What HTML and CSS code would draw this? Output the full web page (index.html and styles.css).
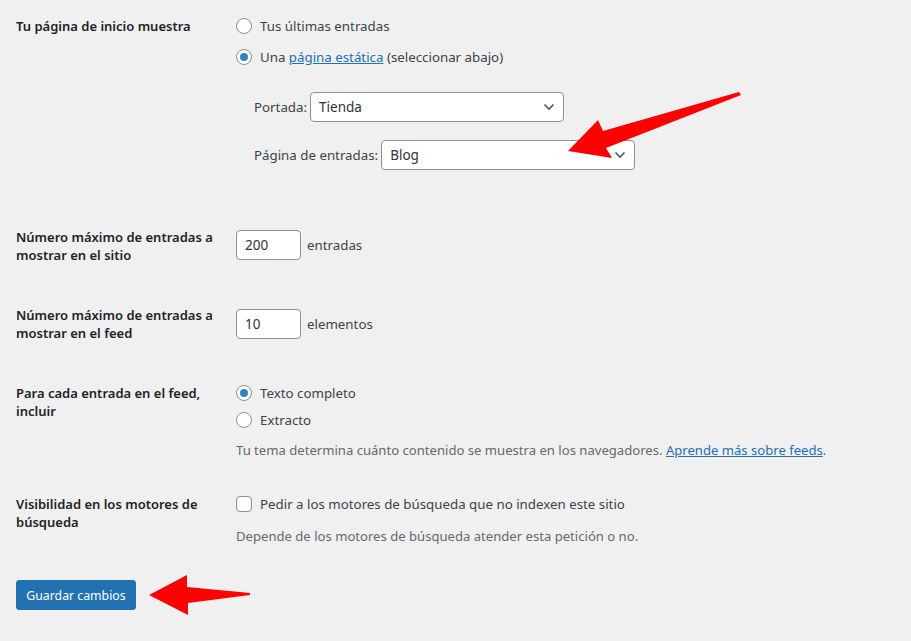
FILE: index.html
```html
<!DOCTYPE html>
<html lang="es">
<head>
<meta charset="utf-8">
<title>Ajustes de lectura</title>
<link rel="stylesheet" href="styles.css">
</head>
<body>
<div class="page">
  <div class="row row-front">
    <div class="th">Tu página de inicio muestra</div>
    <div class="td">
      <div class="opt"><span class="radio"></span><span>Tus últimas entradas</span></div>
      <div class="opt opt-2"><span class="radio checked"></span><span>Una <a href="#">página estática</a> (seleccionar abajo)</span></div>
      <div class="sub">
        <div class="subrow"><span>Portada:</span><span class="select sel-front"><span>Tienda</span><svg class="chev" width="12" height="8" viewBox="0 0 12 8"><path d="M1.5 1.5 L6 6 L10.5 1.5" fill="none" stroke="#50575e" stroke-width="1.6"/></svg></span></div>
        <div class="subrow subrow-2"><span>Página de entradas:</span><span class="select sel-posts"><span>Blog</span><svg class="chev" width="12" height="8" viewBox="0 0 12 8"><path d="M1.5 1.5 L6 6 L10.5 1.5" fill="none" stroke="#50575e" stroke-width="1.6"/></svg></span></div>
      </div>
    </div>
  </div>

  <div class="row row-posts">
    <div class="th">Número máximo de entradas a mostrar en el sitio</div>
    <div class="td td-input"><span class="num">200</span><span>entradas</span></div>
  </div>

  <div class="row row-feed">
    <div class="th">Número máximo de entradas a mostrar en el feed</div>
    <div class="td td-input td-input-2"><span class="num">10</span><span>elementos</span></div>
  </div>

  <div class="row row-include">
    <div class="th">Para cada entrada en el feed, incluir</div>
    <div class="td">
      <div class="opt"><span class="radio checked"></span><span>Texto completo</span></div>
      <div class="opt opt-3"><span class="radio"></span><span>Extracto</span></div>
      <p class="desc desc-1">Tu tema determina cuánto contenido se muestra en los navegadores. <a href="#">Aprende más sobre feeds</a>.</p>
    </div>
  </div>

  <div class="row row-vis">
    <div class="th">Visibilidad en los motores de búsqueda</div>
    <div class="td">
      <div class="opt"><span class="check"></span><span>Pedir a los motores de búsqueda que no indexen este sitio</span></div>
      <p class="desc desc-2">Depende de los motores de búsqueda atender esta petición o no.</p>
    </div>
  </div>

  <div class="actions"><button class="btn" type="button">Guardar cambios</button></div>

  <svg class="arrows" width="911" height="641" viewBox="0 0 911 641">
    <polygon fill="#ff0000" points="739,92 741,95 606,148 612,158 568,151 598,120 603,131"/>
    <polygon fill="#ff0000" points="149,595 187,575 187,587 250,593 250,595 188,603 188,615"/>
  </svg>
</div>
</body>
</html>
```

FILE: styles.css
```css
html, body {
  margin: 0;
  padding: 0;
  background: #f0f0f1;
}
body {
  font-family: "Noto Sans", "Open Sans", sans-serif;
  font-size: 13.3px;
  color: #3c434a;
}
.page {
  position: relative;
  width: 911px;
  height: 641px;
  padding: 17px 0 0 16px;
  box-sizing: border-box;
  overflow: hidden;
}
a {
  color: #2271b1;
  text-decoration: underline;
}
.row {
  display: grid;
  grid-template-columns: 220px 1fr;
  align-items: start;
}
.th {
  font-weight: 600;
  font-size: 13px;
  color: #1d2327;
  line-height: 18px;
  width: 205px;
}
.td {
  display: flex;
  flex-direction: column;
  align-items: flex-start;
}
.opt {
  display: flex;
  align-items: center;
  gap: 8px;
  height: 18px;
  line-height: 18px;
}
.opt-2 { margin-top: 13px; }
.opt-3 { margin-top: 9px; }
.radio {
  width: 16px;
  height: 16px;
  border: 1px solid #8c8f94;
  border-radius: 50%;
  background: #fff;
  box-sizing: border-box;
  display: flex;
  align-items: center;
  justify-content: center;
  flex: none;
}
.radio.checked::before {
  content: "";
  width: 8px;
  height: 8px;
  border-radius: 50%;
  background: #3582c4;
}
.check {
  width: 16px;
  height: 16px;
  border: 1px solid #8c8f94;
  border-radius: 4px;
  background: #fff;
  box-sizing: border-box;
  flex: none;
}
.sub {
  margin: 26px 0 0 18px;
  display: flex;
  flex-direction: column;
  gap: 18px;
}
.subrow {
  display: flex;
  align-items: center;
  gap: 3px;
}
.select {
  display: flex;
  align-items: center;
  justify-content: space-between;
  height: 30px;
  box-sizing: border-box;
  border: 1px solid #8c8f94;
  border-radius: 4px;
  background: #fff;
  padding: 0 8px 0 8px;
  color: #2c3338;
  font-size: 13.5px;
}
.sel-front { width: 254px; }
.sel-posts { width: 254px; }
.chev { flex: none; }

.row-posts { margin-top: 58px; }
.row-feed { margin-top: 42px; }
.row-include { margin-top: 42px; }
.row-vis { margin-top: 35px; }

.td-input {
  flex-direction: row;
  align-items: center;
  gap: 6px;
  padding-top: 2px;
}
.td-input-2 { padding-top: 3px; }
.num {
  width: 65px;
  height: 30px;
  box-sizing: border-box;
  border: 1px solid #8c8f94;
  border-radius: 4px;
  background: #fff;
  padding: 0 8px;
  display: flex;
  align-items: center;
  color: #2c3338;
  font-size: 13.5px;
}
.desc {
  margin: 0;
  color: #646970;
  font-size: 13.1px;
  line-height: 20px;
}
.desc-1 { margin-top: 11px; }
.desc-2 { margin-top: 13px; }
.actions {
  margin-top: 34px;
}
.btn {
  width: 120px;
  height: 30px;
  border: 1px solid #2271b1;
  border-radius: 3px;
  background: #2271b1;
  color: #fff;
  font-family: inherit;
  font-size: 12.3px;
  padding: 0;
  cursor: pointer;
}
.arrows {
  position: absolute;
  left: 0;
  top: 0;
  pointer-events: none;
}
```
